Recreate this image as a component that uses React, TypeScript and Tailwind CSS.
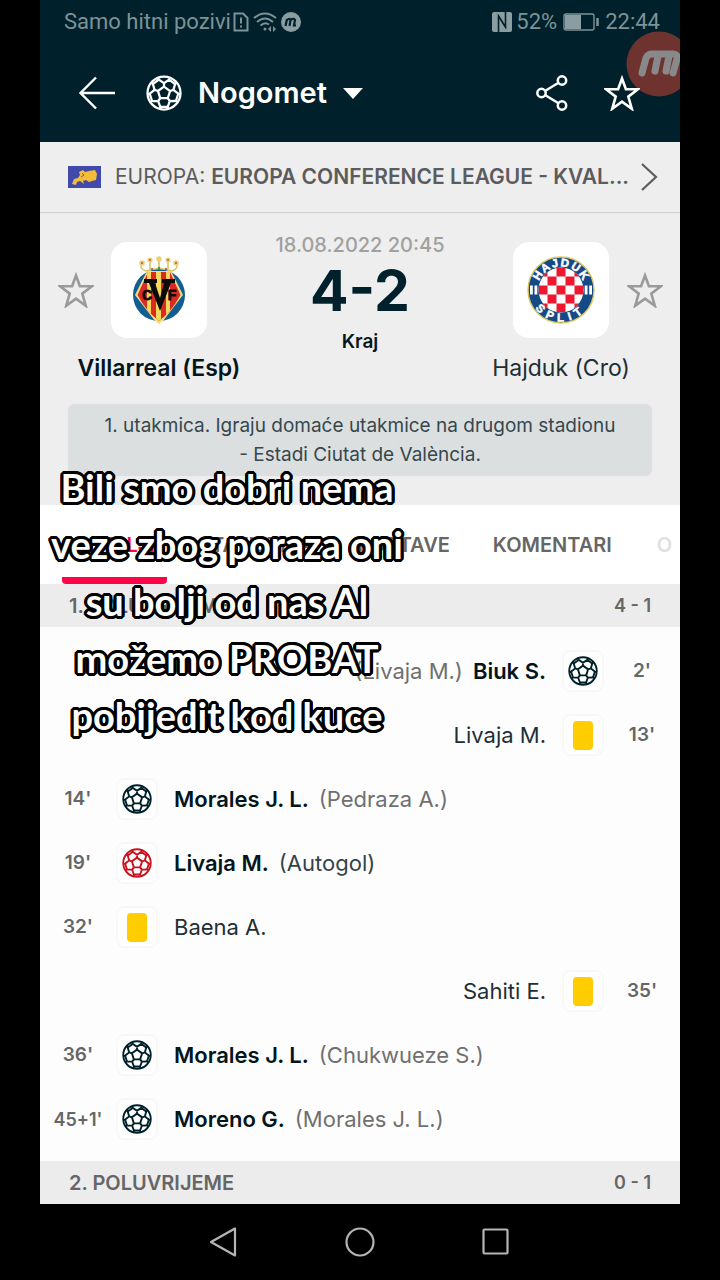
import type { ReactNode } from "react"
import { clsx } from "clsx"

type MatchEvent = {
  minute: string
  side: "home" | "away"
  kind: "goal" | "own-goal" | "yellow"
  player: string
  note?: string
}

const events: MatchEvent[] = [
  { minute: "2'", side: "away", kind: "goal", player: "Biuk S.", note: "(Livaja M.)" },
  { minute: "13'", side: "away", kind: "yellow", player: "Livaja M." },
  { minute: "14'", side: "home", kind: "goal", player: "Morales J. L.", note: "(Pedraza A.)" },
  { minute: "19'", side: "home", kind: "own-goal", player: "Livaja M.", note: "(Autogol)" },
  { minute: "32'", side: "home", kind: "yellow", player: "Baena A." },
  { minute: "35'", side: "away", kind: "yellow", player: "Sahiti E." },
  { minute: "36'", side: "home", kind: "goal", player: "Morales J. L.", note: "(Chukwueze S.)" },
  { minute: "45+1'", side: "home", kind: "goal", player: "Moreno G.", note: "(Morales J. L.)" },
]

const tabs = ["DETALJI", "STATISTIKA", "POSTAVE", "KOMENTARI"]

const captionLines = [
  "Bili smo dobri nema",
  "veze zbog poraza oni",
  "su bolji od nas Al",
  "možemo PROBAT",
  "pobijedit kod kuce",
]

function Football({ className }: { className?: string }) {
  return (
    <svg viewBox="-12 -12 24 24" fill="none" stroke="currentColor" strokeWidth="1.5" className={className} aria-hidden="true">
      <circle r="11" />
      {[0, 72, 144, 216, 288].map((angle) => (
        <path
          key={angle}
          transform={`rotate(${angle})`}
          d="M0 -4.3L4.1 -1.3M0 -4.3V-6.6M-4.1 -10.2L-3.4 -8.9L0 -6.6L3.4 -8.9L4.1 -10.2M3.4 -8.9L7.4 -6"
        />
      ))}
    </svg>
  )
}

function StarIcon({ className }: { className?: string }) {
  return (
    <svg viewBox="0 0 36 36" fill="none" stroke="currentColor" strokeWidth="2.6" className={className} aria-hidden="true">
      <path d="M18 3.5L21.9 14.2H34L24.3 21.6L27.8 33.8L18 26.7L8.2 33.8L11.7 21.6L2 14.2H14.1Z" />
    </svg>
  )
}

function VillarrealCrest() {
  return (
    <svg viewBox="0 0 54 68" className="h-[68px] w-[54px]" role="img" aria-label="Villarreal">
      <circle cx="27" cy="39" r="26" fill="#125f8f" />
      <path d="M15 15H39L51 39L31 65L27 68L23 65L3 39Z" fill="#f3dc8a" />
      <clipPath id="crest-shield">
        <path d="M16 16H38L48.5 39Q40 55 27 65Q14 55 5.500 39Z" />
      </clipPath>
      <g clipPath="url(#crest-shield)">
        <path d="M5 14H49V66H5Z" fill="#dc2a20" />
        <path d="M15 14H19V66H15ZM24 14H29V66H24ZM34 14H38V66H34Z" fill="#f8d75e" />
      </g>
      <g fill="none" stroke="#dcc465" strokeWidth="1.6">
        <path d="M14 15Q27 10 40 15M14 15Q7 13 10 7M40 15Q47 13 44 7M18 13L18 5M36 13L36 5M27 12V4" />
      </g>
      <g fill="#ead27c">
        <circle cx="10" cy="7" r="2.8" />
        <circle cx="18" cy="4" r="2.6" />
        <circle cx="27" cy="3" r="2.8" />
        <circle cx="36" cy="4" r="2.6" />
        <circle cx="44" cy="7" r="2.8" />
      </g>
      <g fill="#b5523a">
        <circle cx="10" cy="7" r="1" />
        <circle cx="18" cy="4" r="0.9" />
        <circle cx="36" cy="4" r="0.9" />
        <circle cx="44" cy="7" r="1" />
        <circle cx="20" cy="13" r="1.1" />
        <circle cx="34" cy="13" r="1.1" />
      </g>
      <circle cx="27" cy="12" r="1.300" fill="#3e9b5e" />
      <g fill="#0b0b0b" stroke="#0b0b0b" strokeWidth="0.8" fontFamily="'Liberation Sans', sans-serif" fontWeight="700" textAnchor="middle">
        <text x="15" y="44" fontSize="14">C</text>
        <text x="40" y="44" fontSize="14">F</text>
      </g>
      <path d="M12 23H25V27H23L28 42L32 27H30V23H43V27H39L28 55L17 27H12Z" fill="#0b0b0b" />
    </svg>
  )
}

const topLetters = [
  ["H", -58], ["A", -35], ["J", -13], ["D", 8], ["U", 33], ["K", 57],
] as const

const bottomLetters = [
  ["S", 48], ["P", 24], ["L", 1], ["I", -18], ["T", -37],
] as const

function HajdukCrest() {
  const cells: ReactNode[] = []
  for (let row = 0; row < 5; row++) {
    for (let col = 0; col < 5; col++) {
      if ((row + col) % 2 === 0) {
        cells.push(<rect key={`${row}-${col}`} x={11.5 + col * 9} y={11.5 + row * 9} width="9" height="9" fill="#ee1730" />)
      }
    }
  }
  return (
    <svg viewBox="0 0 68 68" className="size-[68px]" role="img" aria-label="Hajduk Split">
      <circle cx="34" cy="34" r="33" fill="#164a87" stroke="#d8c860" strokeWidth="1.4" />
      <circle cx="34" cy="34" r="22.5" fill="#fff" />
      <clipPath id="hajduk-board">
        <circle cx="34" cy="34" r="22.5" />
      </clipPath>
      <g clipPath="url(#hajduk-board)">{cells}</g>
      <path d="M3 29.500H5.800V38.500H3ZM7.500 29.500H10.300V38.500H7.500ZM57.700 29.500H60.500V38.500H57.700ZM62.200 29.500H65V38.500H62.200Z" fill="#fff" />
      <g fill="#fff" stroke="#fff" strokeWidth="0.5" fontFamily="'Liberation Sans', sans-serif" fontWeight="700" fontSize="11.500" textAnchor="middle">
        {topLetters.map(([letter, angle]) => (
          <text key={letter} x="34" y="10.500" transform={`rotate(${angle} 34 34)`}>{letter}</text>
        ))}
        {bottomLetters.map(([letter, angle]) => (
          <text key={letter} x="34" y="65.500" transform={`rotate(${angle} 34 34)`}>{letter}</text>
        ))}
      </g>
    </svg>
  )
}

function StatusBar() {
  return (
    <div className="flex h-11 items-center justify-between pl-6 pr-5 font-['Roboto',sans-serif] text-[22px] leading-none text-[#7d9297]">
      <div className="flex items-center gap-0.5">
        <span className="whitespace-nowrap">Samo hitni pozivi</span>
        <svg viewBox="0 0 16 20" className="h-5 w-4" fill="none" stroke="currentColor" strokeWidth="2" aria-hidden="true">
          <path d="M1.500 1.500H10L14.500 6V18.500H1.500ZM8 5.500V11.500M8 13.500V15.500" />
        </svg>
        <svg viewBox="0 0 24 20" className="ml-0.5 h-5 w-6" fill="none" stroke="currentColor" strokeWidth="2" aria-hidden="true">
          <path d="M1 6Q12 -3 23 6M4 10Q12 3 20 10M7.500 13.500Q12 9.500 16 12.500" />
          <circle cx="12" cy="17" r="1.500" fill="currentColor" stroke="none" />
          <path d="M18 14V20L15 17ZM20 14V20L23 17Z" fill="currentColor" stroke="none" />
        </svg>
        <svg viewBox="0 0 20 20" className="ml-0.5 size-5" aria-hidden="true">
          <circle cx="10" cy="10" r="10" fill="#8a9da1" />
          <path d="M4.500 14L6 7M6 8Q9 5.500 9.500 8L8.500 14M9.500 8Q13 5.500 14 8L13 13.500H15" fill="none" stroke="#00212b" strokeWidth="2.200" />
        </svg>
      </div>
      <div className="flex items-center gap-1">
        <svg viewBox="0 0 20 20" className="size-5" aria-hidden="true">
          <rect width="20" height="20" rx="2" fill="#8a9da1" />
          <path d="M6.500 20V4L14 16M13.500 0V15L6.500 4" fill="none" stroke="#00212b" strokeWidth="1.600" />
        </svg>
        <span>52%</span>
        <svg viewBox="0 0 36 18" className="ml-0.5 h-[18px] w-9" fill="none" stroke="currentColor" aria-hidden="true">
          <rect x="1" y="1" width="30" height="16" rx="2" strokeWidth="1.400" />
          <rect x="2" y="2" width="16" height="14" fill="#8a9da1" stroke="none" />
          <path d="M34.500 5V13" strokeWidth="2.500" />
        </svg>
        <span className="ml-0.5">22:44</span>
      </div>
    </div>
  )
}

function AppBar() {
  return (
    <div className="flex h-[98px] items-center justify-between pl-[38px] pr-10 text-white">
      <div className="flex items-center">
        <button type="button" aria-label="Natrag">
          <svg viewBox="0 0 38 34" className="h-[34px] w-[38px]" fill="none" stroke="currentColor" strokeWidth="2.400" aria-hidden="true">
            <path d="M18 1.500L2.500 17L18 32.500M2.500 17H37" />
          </svg>
        </button>
        <button type="button" className="ml-[30px] flex items-center">
          <Football className="size-9" />
          <span className="ml-4 text-[29px] font-semibold leading-9">Nogomet</span>
          <svg viewBox="0 0 20 11" className="ml-4 h-[11px] w-5" fill="currentColor" aria-hidden="true">
            <path d="M0 0H20L10 11Z" />
          </svg>
        </button>
      </div>
      <div className="flex items-center gap-9">
        <button type="button" aria-label="Podijeli">
          <svg viewBox="0 0 32 36" className="h-9 w-8" fill="none" stroke="currentColor" strokeWidth="2.500" aria-hidden="true">
            <circle cx="5.500" cy="18" r="4.200" />
            <circle cx="26" cy="5.500" r="4.200" />
            <circle cx="26" cy="30.500" r="4.200" />
            <path d="M9 16L22.500 7.700M9 20L22.500 28.300" />
          </svg>
        </button>
        <button type="button" aria-label="Dodaj u favorite">
          <StarIcon className="size-9" />
        </button>
      </div>
    </div>
  )
}

function RecorderBubble() {
  return (
    <svg viewBox="0 0 66 66" className="absolute -right-3 top-[31px] size-[66px]" aria-hidden="true">
      <circle cx="33" cy="33" r="32.500" fill="#6e332f" />
      <path d="M16 42L20 27Q22 23 26 23H47Q52 23 51 28L47 42M32 25L29 40M43 25L40 40" fill="none" stroke="#89888a" strokeWidth="7" strokeLinejoin="round" strokeLinecap="round" />
    </svg>
  )
}

function LeagueRow() {
  return (
    <a href="#league" className="flex h-[71px] items-center border-b border-[#cfcfcf] bg-[#eeeeee] pl-7 pr-[22px] text-[#5c5c5c]">
      <svg viewBox="0 0 33 22" className="h-[22px] w-[33px] shrink-0" aria-hidden="true">
        <path d="M0 0H33V22H0Z" fill="#4149ad" />
        <path d="M4 18L6 13L10 12L12 9L11 6L15 4L17 6L21 5L27 4L29 8L28 14L24 15L21 16L18 14L15 15L16 18L12 15L9 16L8 19Z" fill="#f4bd38" />
        <path d="M14 7L16 9L13 11" stroke="#4149ad" strokeWidth="0.800" fill="none" />
      </svg>
      <span className="ml-[14px] min-w-0 flex-1 whitespace-nowrap text-[21px] leading-6">
        EUROPA: <b className="font-semibold">EUROPA CONFERENCE LEAGUE - KVAL...</b>
      </span>
      <svg viewBox="0 0 18 30" className="h-[30px] w-[18px] shrink-0" fill="none" stroke="currentColor" strokeWidth="2.200" aria-hidden="true">
        <path d="M2 2L16 15L2 28" />
      </svg>
    </a>
  )
}

function Team({ name, crest, away, bold }: { name: string; crest: ReactNode; away?: boolean; bold?: boolean }) {
  return (
    <div className="pt-2">
      <div className={clsx("flex items-center", away && "flex-row-reverse")}>
        <div className="flex flex-1 justify-center">
          <button type="button" aria-label={`Prati ${name}`} className="text-[#9a9a9a]">
            <StarIcon className="size-9" />
          </button>
        </div>
        <div className="flex size-24 items-center justify-center rounded-2xl bg-white">{crest}</div>
        <div className="flex-1" />
      </div>
      <p className={clsx("mt-[14px] text-center text-[23px] leading-8", bold ? "font-semibold text-[#04161c]" : "text-[#1f2f35]")}>{name}</p>
    </div>
  )
}

function MatchHeader() {
  return (
    <section className="bg-[#eeeeee] pb-[29px] pt-[21px]">
      <div className="grid grid-cols-[1fr_164px_1fr]">
        <Team name="Villarreal (Esp)" crest={<VillarrealCrest />} bold />
        <div className="flex flex-col items-center">
          <time className="whitespace-nowrap text-[20px] font-medium leading-[22px] text-[#a0a0a0]">18.08.2022 20:45</time>
          <strong className="text-[57px] font-bold leading-[70px] text-[#00212b]">4-2</strong>
          <span className="text-[19px] font-semibold leading-8 text-[#04161c]">Kraj</span>
        </div>
        <Team name="Hajduk (Cro)" crest={<HajdukCrest />} away />
      </div>
      <p className="mx-7 mt-5 rounded-md bg-[#dcdfdf] px-5 py-[7px] text-center text-[19px] leading-[29px] text-[#36474d]">
        1. utakmica. Igraju domaće utakmice na drugom stadionu
        <br />- Estadi Ciutat de València.
      </p>
    </section>
  )
}

function Tabs() {
  return (
    <nav className="flex h-[79px] overflow-hidden bg-white pl-[22px] text-[20px] font-semibold text-[#666666]">
      {tabs.map((tab, i) => (
        <button
          key={tab}
          type="button"
          className={clsx("mr-[19px] shrink-0 border-b-[7px] px-3 pt-[7px]", i === 0 ? "rounded-sm border-[#fb0448] text-[#fb0448]" : "border-transparent")}
        >
          {tab}
        </button>
      ))}
      <button type="button" className="ml-auto mr-2 shrink-0 text-[#e0e0e0]">O</button>
    </nav>
  )
}

function HalfHeader({ title, score }: { title: string; score: string }) {
  return (
    <h2 className="flex h-[43px] items-center justify-between bg-[#ececec] px-[29px] font-semibold text-[#666666]">
      <span className="text-[20px]">{title}</span>
      <span className="text-[18px]">{score}</span>
    </h2>
  )
}

function EventRow({ event }: { event: MatchEvent }) {
  const isGoal = event.kind !== "yellow"
  const away = event.side === "away"
  return (
    <li className={clsx("flex h-16 items-center", away && "flex-row-reverse")}>
      <span className={clsx("w-[76px] text-center font-semibold text-[#666666]", event.minute.length > 4 ? "text-[18px]" : "text-[19px]")}>
        {event.minute}
      </span>
      <span className="flex size-[42px] items-center justify-center rounded-lg border-2 border-[#f7f8f8] bg-white">
        {isGoal ? (
          <Football className={clsx("size-[30px]", event.kind === "own-goal" ? "text-[#c8141e]" : "text-[#00212b]")} />
        ) : (
          <span className="h-[29px] w-5 rounded bg-[#ffcd00]" />
        )}
      </span>
      <span className={clsx("mx-4 flex gap-2.5 text-[22px] leading-8", away && "flex-row-reverse")}>
        <span className={isGoal ? "font-semibold text-[#04161c]" : "text-[#1f2f35]"}>{event.player}</span>
        {event.note && (
          <span className={event.kind === "own-goal" ? "text-[#33434a]" : "text-[#707070]"}>{event.note}</span>
        )}
      </span>
    </li>
  )
}

function Caption() {
  return (
    <p className="absolute left-[11px] top-[459px] whitespace-nowrap text-center font-['Lato',sans-serif] text-[38px] font-bold leading-[57px] text-white [text-shadow:3px_0_#000,-3px_0_#000,0_3px_#000,0_-3px_#000,2px_2px_#000,-2px_2px_#000,2px_-2px_#000,-2px_-2px_#000,3px_1px_#000,3px_-1px_#000,-3px_1px_#000,-3px_-1px_#000,1px_3px_#000,-1px_3px_#000,1px_-3px_#000,-1px_-3px_#000]">
      {captionLines.map((line) => (
        <span key={line} className="block">{line}</span>
      ))}
    </p>
  )
}

function SystemNav() {
  return (
    <div className="flex h-[76px] items-center justify-center gap-[106px] text-[#b5b5b5]">
      <button type="button" aria-label="Natrag">
        <svg viewBox="0 0 30 30" className="size-[30px]" fill="none" stroke="currentColor" strokeWidth="2.200" strokeLinejoin="round" aria-hidden="true">
          <path d="M26 1.500V28.500L2 15Z" />
        </svg>
      </button>
      <button type="button" aria-label="Početna">
        <svg viewBox="0 0 30 30" className="size-[30px]" fill="none" stroke="currentColor" strokeWidth="2.200" aria-hidden="true">
          <circle cx="15" cy="15" r="13.500" />
        </svg>
      </button>
      <button type="button" aria-label="Nedavno">
        <svg viewBox="0 0 30 30" className="size-[30px]" fill="none" stroke="currentColor" strokeWidth="2.200" aria-hidden="true">
          <rect x="2.500" y="2.500" width="24" height="24" rx="1" />
        </svg>
      </button>
    </div>
  )
}

export default function App() {
  return (
    <div className="min-h-screen bg-black px-10 font-['Inter',sans-serif]">
      <main className="relative overflow-hidden bg-[#fdfdfd]">
        <header className="relative bg-[#00212b]">
          <RecorderBubble />
          <div className="relative">
            <StatusBar />
            <AppBar />
          </div>
        </header>
        <LeagueRow />
        <MatchHeader />
        <Tabs />
        <HalfHeader title="1. POLUVRIJEME" score="4 - 1" />
        <ul className="pb-2.5 pt-3">
          {events.map((event) => (
            <EventRow key={event.minute} event={event} />
          ))}
        </ul>
        <HalfHeader title="2. POLUVRIJEME" score="0 - 1" />
        <Caption />
      </main>
      <SystemNav />
    </div>
  )
}
